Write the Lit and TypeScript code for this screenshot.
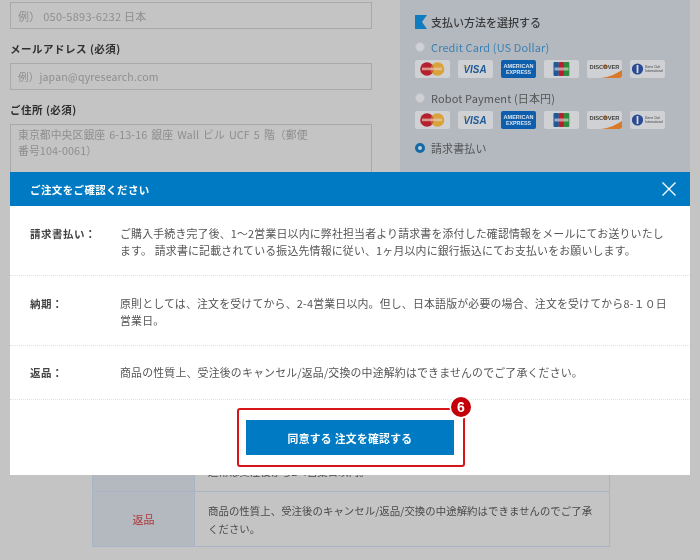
import { LitElement, html, css } from "lit";
import { customElement } from "lit/decorators.js";

const cards = () => html`<div class="cards">
  <div class="card"><svg viewBox="0 0 35 18" width="35" height="18"><circle cx="12" cy="9" r="6.8" fill="#b5222f"/><circle cx="22.5" cy="9" r="6.8" fill="#d9a33c"/><path d="M17.2 4.7a6.8 6.8 0 0 1 0 8.6a6.8 6.8 0 0 1 0-8.6z" fill="#c9602f"/><rect x="7" y="7.6" width="20" height="2.6" fill="#e8c9b8" opacity=".7"/></svg></div>
  <div class="card"><svg viewBox="0 0 35 18" width="35" height="18"><text x="5.5" y="13.2" textLength="23" lengthAdjust="spacingAndGlyphs" class="visa">VISA</text><path d="M4.5 5l4 1 .6 2z" fill="#c79a3a"/></svg></div>
  <div class="card amex"><svg viewBox="0 0 35 18" width="35" height="18"><text x="2.5" y="8.2" textLength="30" lengthAdjust="spacingAndGlyphs" class="amx">AMERICAN</text><text x="5" y="14" textLength="25" lengthAdjust="spacingAndGlyphs" class="amx">EXPRESS</text></svg></div>
  <div class="card"><svg viewBox="0 0 35 18" width="35" height="18"><rect x="9.5" y="2" width="5.4" height="14" rx="1" fill="#1c5a9a"/><rect x="14.7" y="2" width="5.4" height="14" rx="1" fill="#b5222f"/><rect x="19.9" y="2" width="5.4" height="14" rx="1" fill="#2f8a3c"/><rect x="10.5" y="7.5" width="14" height="3" fill="#e6e6e6" opacity=".6"/></svg></div>
  <div class="card"><svg viewBox="0 0 35 18" width="35" height="18"><circle cx="18.2" cy="6.5" r="2.2" fill="#d9792a"/><text x="2.5" y="8.5" textLength="30" lengthAdjust="spacingAndGlyphs" class="disc">DISCOVER</text><path d="M14 18 C22 17 29 14 35 10 V16 a2 2 0 0 1-2 2z" fill="#d9792a"/></svg></div>
  <div class="card"><svg viewBox="0 0 35 18" width="35" height="18"><circle cx="7.5" cy="9" r="5.6" fill="#2a4a94"/><rect x="6.6" y="5" width="1.8" height="8" fill="#d8dae0"/><text x="15" y="8" textLength="15" lengthAdjust="spacingAndGlyphs" class="din">Diners Club</text><text x="15" y="12.4" textLength="18" lengthAdjust="spacingAndGlyphs" class="din">International</text></svg></div>
</div>`;

@customElement("app-root")
export class AppRoot extends LitElement {
  static styles = css`
    :host { display: block; width: 700px; height: 560px; position: relative; overflow: hidden; background: #c4c4c4;
      font-family: "Noto Sans CJK JP", "Noto Sans", sans-serif; color: #4a4a4a; }
    .page { display: flex; flex-direction: column; height: 560px; filter: blur(0.35px); }
    .top { display: flex; height: 437px; flex: none; }
    .form { width: 362px; margin-left: 10px; padding-top: 2px; display: flex; flex-direction: column; }
    .input { height: 27px; border: 1px solid #a9a9a9; box-sizing: border-box; padding: 0 7px; display: flex; align-items: center;
      font-size: 10.5px; color: #8e8e8e; letter-spacing: .2px; }
    .phone { font-size: 11px; letter-spacing: .25px; }
    .label { font-size: 10.5px; font-weight: 700; color: #2f2f2f; height: 34px; padding-top: 4px; box-sizing: border-box; display: flex; align-items: center; letter-spacing: .5px; }
    .area { height: 90px; border: 1px solid #a9a9a9; box-sizing: border-box; padding: 1px 7px; font-size: 10.8px; line-height: 16.3px; color: #8e8e8e; letter-spacing: .1px; word-spacing: 1.5px; }
    .pay { width: 290px; margin-left: 28px; height: 180px; background: #b4b8bf; padding: 14px 15px 0; box-sizing: border-box; }
    .pay-title { display: flex; align-items: center; gap: 4px; font-size: 11px; font-weight: 500; color: #3a3a3a; height: 16px; }
    .flag { display: block; }
    .opt { display: flex; align-items: center; gap: 6px; font-size: 11px; height: 14px; color: #555; letter-spacing: .12px; margin-top: 10px; }
    .opt.blue { color: #3a82b4; }
    .radio { width: 10px; height: 10px; border-radius: 50%; box-sizing: border-box; background: #cfd1d5; border: 1px solid #c0c2c7; flex: none; }
    .radio.on { background: #c4ccd8; border: 3px solid #0f6aa6; }
    .cards { display: flex; gap: 8px; margin-top: 6px; height: 18px; }
    .card { width: 35px; height: 18px; border-radius: 2px; background: #cfd1d4; overflow: hidden; }
    .card svg { display: block; }
    .amex { background: #0d5fae; }
    .visa { font: italic 700 10px "Liberation Sans", sans-serif; fill: #1f5a96; }
    .amx { font: 700 5.2px "Liberation Sans", sans-serif; fill: #dbe4ee; }
    .disc { font: 700 5.6px "Liberation Sans", sans-serif; fill: #444; }
    .din { font: italic 3.2px "Liberation Sans", sans-serif; fill: #444; }
    .gap2 { margin-top: 13px; }
    .gap3 { margin-top: 12px; }
    .table { margin-left: 92px; width: 518px; box-sizing: border-box; border: 1px solid #a9b4c6; display: flex; flex-direction: column; }
    .tr { display: grid; grid-template-columns: 102px 1fr; }
    .tr + .tr { border-top: 1px solid #a9b4c6; }
    .th { background: #b4b8bf; border-right: 1px solid #a9b4c6; display: flex; align-items: center; justify-content: center; font-size: 11px; color: #ad3a3e; }
    .td { padding: 10px 12px 9px 13px; font-size: 10.4px; line-height: 17.5px; color: #4a4a4a; letter-spacing: .06px; }
    .r1 { height: 53px; }
    .r1 .td { padding-top: 25px; }

    .modal { position: absolute; left: 10px; top: 172px; width: 680px; height: 303px; background: #fff; display: flex; flex-direction: column; filter: blur(0.3px); }
    .mhead { height: 34px; flex: none; background: #007bc3; color: #fff; display: flex; align-items: center; justify-content: space-between; padding: 0 14px 0 20px; font-size: 10.5px; font-weight: 700; letter-spacing: .38px; }
    .x { display: block; }
    .row { display: grid; grid-template-columns: 90px 1fr; border-bottom: 1px dotted #dbe4e4; padding: 0 20px; box-sizing: border-box; align-items: start; }
    .row .k { font-size: 10.5px; font-weight: 700; color: #444; letter-spacing: .5px; line-height: 17.4px; }
    .row .v { font-size: 10.9px; color: #555; letter-spacing: .19px; line-height: 17.4px; white-space: nowrap; }
    .a { height: 70px; padding-top: 19px; }
    .b { height: 70px; padding-top: 19px; }
    .c { height: 54px; padding-top: 18px; }
    .foot { flex: 1; display: flex; justify-content: center; align-items: flex-start; padding: 8px 0 0 2px; }
    .redbox { position: relative; width: 228px; height: 59px; border: 2px solid #d7141a; border-radius: 3px; box-sizing: border-box; display: flex; align-items: flex-start; padding: 10px 0 0 7px; }
    .btn { width: 208px; height: 35px; background: #007bc3; color: #fff; font-size: 10.8px; font-weight: 700; border: 0; padding: 0; font-family: inherit; letter-spacing: .3px; }
    .badge { position: absolute; right: -8px; top: -13px; width: 20px; height: 20px; border-radius: 50%; background: #c40008; box-shadow: 0 0 0 1.5px #fff; color: #fff; font: 700 14px "Liberation Sans", sans-serif; display: flex; align-items: center; justify-content: center; }
  `;

  render() {
    return html`
      <div class="page">
        <div class="top">
          <div class="form">
            <div class="input phone">例） 050-5893-6232 日本</div>
            <div class="label">メールアドレス (必須)</div>
            <div class="input">例）japan@qyresearch.com</div>
            <div class="label">ご住所 (必須)</div>
            <div class="area">東京都中央区銀座 6-13-16 銀座 Wall ビル UCF 5 階（郵便<br>番号104-0061）</div>
          </div>
          <div class="pay">
            <div class="pay-title"><svg class="flag" width="12" height="14" viewBox="0 0 12 14"><path d="M0 0H12L7 7l5 7H0z" fill="#0f7cc0"/></svg>支払い方法を選択する</div>
            <div class="opt blue"><span class="radio"></span>Credit Card (US Dollar)</div>
            ${cards()}
            <div class="opt gap2"><span class="radio"></span>Robot Payment (日本円)</div>
            ${cards()}
            <div class="opt gap3"><span class="radio on"></span>請求書払い</div>
          </div>
        </div>
        <div class="table">
          <div class="tr r1"><div class="th"></div><div class="td">通常は受注後から2-4営業日以内。</div></div>
          <div class="tr"><div class="th">返品</div><div class="td">商品の性質上、受注後のキャンセル/返品/交換の中途解約はできませんのでご了承ください。</div></div>
        </div>
      </div>
      <div class="modal">
        <div class="mhead">ご注文をご確認ください
          <svg class="x" width="14" height="14" viewBox="0 0 14 14"><path d="M.5 .5l13 13M13.5 .5l-13 13" stroke="#fff" stroke-width="1.4" fill="none"/></svg>
        </div>
        <div class="row a"><div class="k">請求書払い：</div><div class="v">ご購入手続き完了後、1～2営業日以内に弊社担当者より請求書を添付した確認情報をメールにてお送りいたし<br>ます。 請求書に記載されている振込先情報に従い、1ヶ月以内に銀行振込にてお支払いをお願いします。</div></div>
        <div class="row b"><div class="k">納期：</div><div class="v">原則としては、注文を受けてから、2-4営業日以内。但し、日本語版が必要の場合、注文を受けてから8-１０日<br>営業日。</div></div>
        <div class="row c"><div class="k">返品：</div><div class="v">商品の性質上、受注後のキャンセル/返品/交換の中途解約はできませんのでご了承ください。</div></div>
        <div class="foot">
          <div class="redbox"><button class="btn">同意する 注文を確認する</button><span class="badge">6</span></div>
        </div>
      </div>
    `;
  }
}
